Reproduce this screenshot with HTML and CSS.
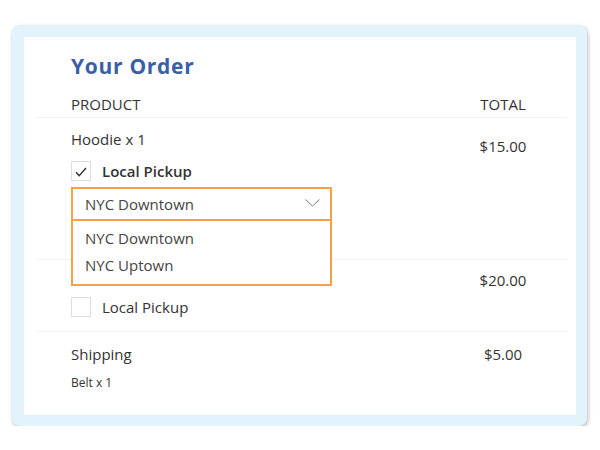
FILE: index.html
```html
<!DOCTYPE html>
<html lang="en">

<head>
    <title>Your Order</title>
    <meta charset="UTF-8" />
    <meta name="viewport" content="width=device-width,initial-scale=1" />
    <link rel="stylesheet" href="styles.css">
</head>

<body>
    <main class="frame">
        <div class="panel">
            <h1 class="title">Your Order</h1>
            <div class="head">
                <span>PRODUCT</span>
                <span class="price">TOTAL</span>
            </div>

            <div class="row first">
                <div class="item">
                    <div class="name">Hoodie x 1</div>
                    <label class="pickup checked">
                        <span class="box">
                            <svg width="12" height="10" viewBox="0 0 12 10"><path d="M1 5.2 L4.2 8.6 L11 1" fill="none" stroke="#333" stroke-width="1.4"/></svg>
                        </span>
                        Local Pickup
                    </label>
                    <div class="select">
                        <div class="select-value">
                            NYC Downtown
                            <svg class="chevron" width="15" height="8" viewBox="0 0 15 8"><path d="M0.5 0.5 L7.5 7 L14.5 0.5" fill="none" stroke="#777" stroke-width="1"/></svg>
                        </div>
                        <ul class="options">
                            <li>NYC Downtown</li>
                            <li>NYC Uptown</li>
                        </ul>
                    </div>
                </div>
                <div class="price">$15.00</div>
            </div>

            <!-- second product's name sits under the open dropdown -->
            <div class="row second">
                <div class="item">
                    <label class="pickup">
                        <span class="box"></span>
                        Local Pickup
                    </label>
                </div>
                <div class="price">$20.00</div>
            </div>

            <div class="row shipping">
                <div class="item">
                    <div class="name">Shipping</div>
                    <div class="note">Belt x 1</div>
                </div>
                <div class="price">$5.00</div>
            </div>
        </div>
    </main>
</body>

</html>
```

FILE: styles.css
```css
/* Reset */
html,
body,
div,
span,
h1,
ul,
li,
label {
    margin: 0;
    padding: 0;
    border: 0;
    font-size: 100%;
    font: inherit;
}

* {
    box-sizing: border-box;
}

/* Variables */
:root {
    --text-color: #333;
    --title-color: #3a5fa6;
    --frame-color: #e3f3fc;
    --line-color: #f2f2f2;
    --accent-color: #f7a04a;
    --box-color: #dcdcdc;
}

body {
    background: #fff;
    color: var(--text-color);
    font: 15px/20px "Open Sans", "Noto Sans", sans-serif;
    padding: 25px 13px 0 12px;
}

/* Frame */
.frame {
    display: block;
    background: var(--frame-color);
    border-radius: 8px;
    box-shadow: 1px 2px 4px rgba(0, 0, 0, 0.28);
    padding: 12px 11px 11px 12px;
}

.panel {
    background: #fff;
    padding: 0 10px 0 12px;
    height: 378px;
}

.title {
    color: var(--title-color);
    font-size: 21px;
    font-weight: bold;
    letter-spacing: 0.7px;
    line-height: 30px;
    padding: 14px 0 0 35px;
}

.head {
    display: flex;
    justify-content: space-between;
    padding: 13px 18px 3px 35px;
    line-height: 20px;
}

.price {
    width: 90px;
    text-align: center;
}

/* Rows */
.row {
    display: flex;
    justify-content: space-between;
    border-top: 1px solid var(--line-color);
    padding: 11px 18px 0 35px;
}

.row.first {
    padding-bottom: 38px;
}

.row.first .price {
    margin-top: 7px;
}

.row.second {
    padding-top: 10px;
    padding-bottom: 14px;
}

.row.second .pickup {
    margin-top: 27px;
}

.row.shipping {
    padding-top: 12px;
}

.pickup {
    display: flex;
    align-items: center;
    gap: 11px;
    margin-top: 12px;
    line-height: 20px;
}

.pickup.checked {
    font-weight: 600;
}

.box {
    display: flex;
    align-items: center;
    justify-content: center;
    width: 20px;
    height: 20px;
    border: 1px solid var(--box-color);
    padding-top: 1px;
}

/* Select */
.select {
    position: relative;
    width: 261px;
    margin-top: 6px;
}

.select-value {
    display: flex;
    align-items: center;
    justify-content: space-between;
    height: 34px;
    border: 2px solid var(--accent-color);
    padding: 0 10px 0 12px;
    color: #444;
}

.chevron {
    margin-top: -2px;
}

.options {
    position: absolute;
    top: 33px;
    left: 0;
    right: 0;
    list-style: none;
    background: #fff;
    border: 2px solid var(--accent-color);
    border-top-width: 1px;
    padding: 4px 12px 5px;
    color: #444;
    z-index: 1;
}

.options li {
    line-height: 27px;
}

.note {
    font-size: 12px;
    margin-top: 9px;
}
```
